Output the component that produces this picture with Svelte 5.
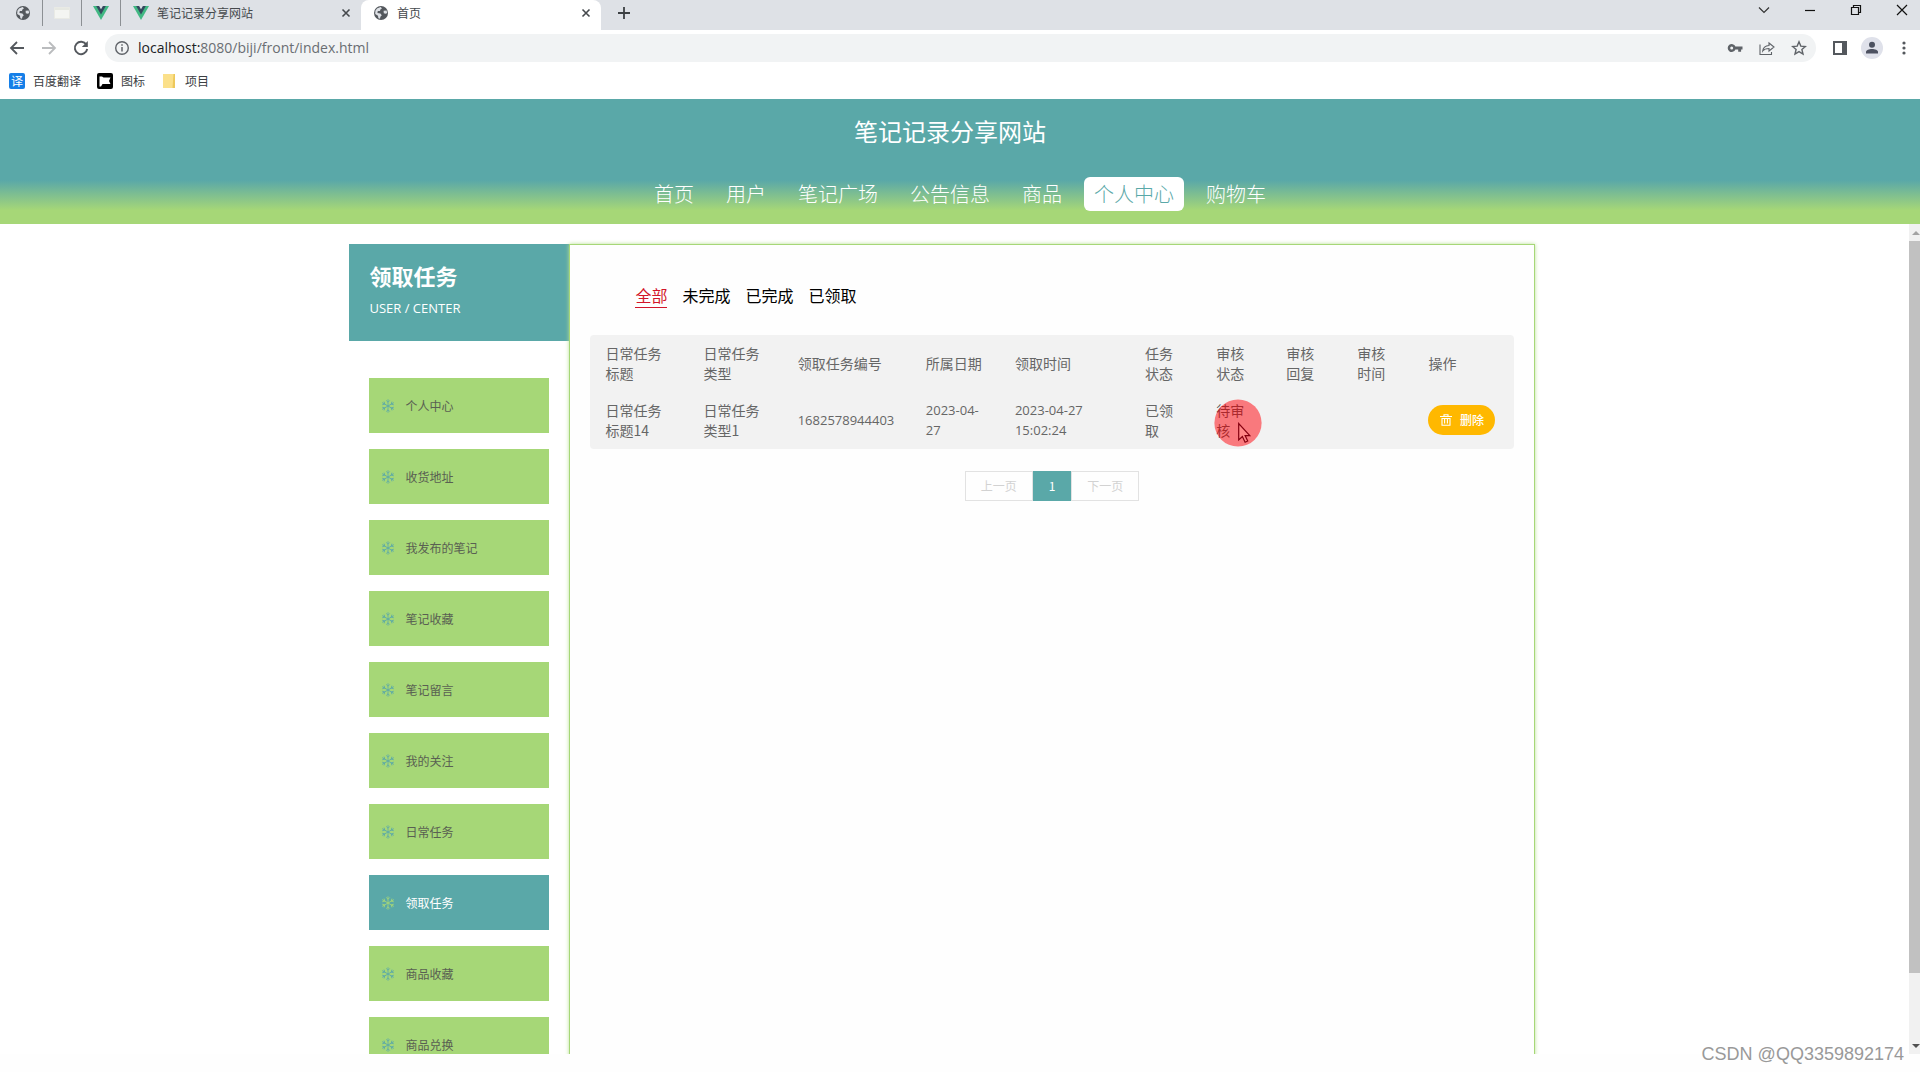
<script>
  const nav = ['首页', '用户', '笔记广场', '公告信息', '商品', '个人中心', '购物车'];
  const menu = ['个人中心', '收货地址', '我发布的笔记', '笔记收藏', '笔记留言', '我的关注', '日常任务', '领取任务', '商品收藏', '商品兑换'];
  const filters = ['全部', '未完成', '已完成', '已领取'];
  const columns = [
    { title: '日常任务标题', width: 98 },
    { title: '日常任务类型', width: 94 },
    { title: '领取任务编号', width: 128 },
    { title: '所属日期', width: 89 },
    { title: '领取时间', width: 130 },
    { title: '任务状态', width: 71 },
    { title: '审核状态', width: 70 },
    { title: '审核回复', width: 71 },
    { title: '审核时间', width: 71 },
    { title: '操作', width: 100 }
  ];
  const total = columns.reduce((sum, c) => sum + c.width, 0);
  let activeNav = $state('个人中心');
  let activeMenu = $state('领取任务');
  let activeFilter = $state('全部');
</script>

{#snippet globe()}
  <svg width="16" height="16" viewBox="0 0 16 16" aria-hidden="true">
    <circle cx="8" cy="8" r="7" fill="#54585d" />
    <path d="M4 3.400 7.600 2l1.400 1.200-1.600 1.200-.4 1.600H4.800L4.400 8l3 .4 1.400 1.800-1.400 1.600-.4 2-1.600-.6-.4-2.400L2.200 9l.2-3.200zM10.600 5.800l3-.2.6 2.400-1.400.8-2-.6z" fill="#dee1e6" />
  </svg>
{/snippet}

{#snippet vue()}
  <svg width="16" height="16" viewBox="0 0 16 16" aria-hidden="true">
    <path d="M0 1h16L8 15z" fill="#41b883" />
    <path d="M3.200 1h9.600L8 9.400z" fill="#35495e" />
    <path d="M6.100 1h3.800L8 4.200z" fill="#dee1e6" />
  </svg>
{/snippet}

{#snippet closeIcon()}
  <svg width="10" height="10" viewBox="0 0 10 10" aria-hidden="true"><path d="M1.500 1.500l7 7m0-7l-7 7" stroke="#45494d" stroke-width="1.600" /></svg>
{/snippet}

{#snippet snow()}
  <svg class="snow" width="14" height="14" viewBox="0 0 14 14" aria-hidden="true">
    <g fill="none" stroke="currentColor" stroke-width=".8">
      {#each [0, 60, 120, 180, 240, 300] as angle}
        <path transform="rotate({angle} 7 7)" d="M7 7V.3M5.200 1.400L7 3.200l1.800-1.800" />
      {/each}
    </g>
  </svg>
{/snippet}

<div class="window">
  <div class="tabstrip">
    <div class="tab pinned">{@render globe()}</div>
    <div class="tab pinned">
      <svg width="16" height="16" viewBox="0 0 16 16" aria-hidden="true"><path d="M.5 2.500h15v11H.5z" fill="#f4f5f2" stroke="#e9eae5" /><path d="M1 3h14v2H1z" fill="#e6e8e2" /></svg>
    </div>
    <div class="tab pinned">{@render vue()}</div>
    <div class="tab wide">
      {@render vue()}<span class="label">笔记记录分享网站</span>
      <button aria-label="关闭标签页">{@render closeIcon()}</button>
    </div>
    <div class="tab wide active">
      {@render globe()}<span class="label">首页</span>
      <button aria-label="关闭标签页">{@render closeIcon()}</button>
    </div>
    <button class="newtab" aria-label="新标签页">
      <svg width="14" height="14" viewBox="0 0 14 14"><path d="M7 1v12M1 7h12" stroke="#3c4043" stroke-width="1.800" /></svg>
    </button>
    <div class="controls">
      <button aria-label="搜索标签页"><svg width="14" height="14" viewBox="0 0 14 14"><path d="M2 4.500l5 5 5-5" fill="none" stroke="#333" stroke-width="1.200" /></svg></button>
      <button aria-label="最小化"><svg width="14" height="14" viewBox="0 0 14 14"><path d="M2 7.500h10" stroke="#111" stroke-width="1.200" /></svg></button>
      <button aria-label="还原"><svg width="14" height="14" viewBox="0 0 14 14"><path d="M2.500 4.500h7v7h-7zM4.500 4.500v-2h7v7h-2" fill="none" stroke="#111" stroke-width="1.200" /></svg></button>
      <button aria-label="关闭"><svg width="14" height="14" viewBox="0 0 14 14"><path d="M2 2l10 10M12 2L2 12" stroke="#111" stroke-width="1.200" /></svg></button>
    </div>
  </div>

  <div class="toolbar">
    <button aria-label="后退"><svg width="16" height="16" viewBox="0 0 16 16"><path d="M15 8H2.500M8 2L2 8l6 6" fill="none" stroke="#54585d" stroke-width="1.800" /></svg></button>
    <button aria-label="前进"><svg width="16" height="16" viewBox="0 0 16 16"><path d="M1 8h12.500M8 2l6 6-6 6" fill="none" stroke="#babcbe" stroke-width="1.800" /></svg></button>
    <button aria-label="刷新"><svg width="16" height="16" viewBox="0 0 16 16"><path d="M13.300 4.600A6.200 6.200 0 1 0 14.200 9" fill="none" stroke="#54585d" stroke-width="1.900" /><path d="M14.800 1v6h-6z" fill="#54585d" /></svg></button>
    <div class="omnibox">
      <svg width="16" height="16" viewBox="0 0 16 16" aria-hidden="true"><circle cx="8" cy="8" r="6.300" fill="none" stroke="#5f6368" stroke-width="1.400" /><path d="M8 7v4.500M8 4.300v1.500" stroke="#5f6368" stroke-width="1.500" /></svg>
      <span class="url">localhost:<span>8080/biji/front/index.html</span></span>
      <button aria-label="管理密码"><svg width="16" height="16" viewBox="0 0 16 16"><path d="M8.400 6.500H15.500v3h-1.400v2.200h-2.900V9.500H8.400a4 4 0 1 1 0-3z" fill="#5f6368" /><circle cx="4.700" cy="8" r="1.500" fill="#f1f3f4" /></svg></button>
      <button aria-label="分享"><svg width="16" height="16" viewBox="0 0 16 16"><path d="M1 4.500v10h11.500v-2.500M3.700 11c.4-3.400 2.300-5.300 6.300-5.500V3l5 4-5 4V8.500C7 8.500 5 9.300 3.700 11z" fill="none" stroke="#5f6368" stroke-width="1.100" /></svg></button>
      <button aria-label="收藏"><svg width="16" height="16" viewBox="0 0 16 16"><path d="M8 1.800l1.800 4.300 4.600.4-3.500 3 1.100 4.500-4-2.400L4 14l1.100-4.500-3.500-3 4.600-.4z" fill="none" stroke="#5f6368" stroke-width="1.400" /></svg></button>
    </div>
    <div class="tools">
      <button aria-label="侧边栏"><svg width="16" height="16" viewBox="0 0 16 16"><path d="M1 1h14v14H1z" fill="#54585d" /><path d="M3 3h7v10H3z" fill="#fff" /></svg></button>
      <button aria-label="用户"><svg width="22" height="22" viewBox="0 0 22 22"><circle cx="11" cy="11" r="11" fill="#dfe1ea" /><circle cx="11" cy="7.800" r="3" fill="#4c5160" /><path d="M5 16.500v-1.500c0-4 12-4 12 0v1.500z" fill="#4c5160" /></svg></button>
      <button aria-label="菜单"><svg width="16" height="16" viewBox="0 0 16 16" fill="#54585d"><circle cx="8" cy="3" r="1.600" /><circle cx="8" cy="8" r="1.600" /><circle cx="8" cy="13" r="1.600" /></svg></button>
    </div>
  </div>

  <div class="bookmarks">
    <a href="#translate"><span class="badge">译</span>百度翻译</a>
    <a href="#icons"><svg width="16" height="16" viewBox="0 0 16 16" aria-hidden="true"><rect width="16" height="16" rx="2" fill="#000" /><path d="M2.500 3.500h2.500l1.500 1h7l-1.500 3.500 1.500 3H5.500l-1.500 2.500H2.500z" fill="#fff" /></svg>图标</a>
    <a href="#projects"><svg width="16" height="16" viewBox="0 0 16 16" aria-hidden="true"><path d="M2 1h12v14H2z" fill="#fbe08a" /><path d="M12.500 1H14v14h-2.500z" fill="#edc85b" /></svg>项目</a>
  </div>

  <header>
    <h1>笔记记录分享网站</h1>
    <nav>
      {#each nav as item}
        <a href="#{item}" class:active={item === activeNav} onclick={() => (activeNav = item)}>{item}</a>
      {/each}
    </nav>
  </header>

  <div class="viewport">
    <main>
      <aside>
        <div class="heading">
          <h2>领取任务</h2>
          <p>USER / CENTER</p>
        </div>
        <ul>
          {#each menu as item}
            <li><a href="#{item}" class:active={item === activeMenu} onclick={() => (activeMenu = item)}>{@render snow()}{item}</a></li>
          {/each}
        </ul>
      </aside>

      <section>
        <div class="filters">
          {#each filters as f}
            <button class:active={f === activeFilter} onclick={() => (activeFilter = f)}>{f}</button>
          {/each}
        </div>
        <table>
          <colgroup>
            {#each columns as c}<col style="width:{(c.width / total) * 100}%" />{/each}
          </colgroup>
          <thead>
            <tr>{#each columns as c}<th scope="col">{c.title}</th>{/each}</tr>
          </thead>
          <tbody>
            <tr>
              <td>日常任务标题14</td>
              <td>日常任务类型1</td>
              <td class="num">1682578944403</td>
              <td class="num">2023-04-27</td>
              <td class="num">2023-04-27 15:02:24</td>
              <td>已领取</td>
              <td class="pointed">待审核
                <svg class="pointer" width="48" height="48" viewBox="0 0 48 48" aria-hidden="true">
                  <circle cx="24" cy="24" r="23.600" fill="#ff0008" fill-opacity=".5" />
                  <path d="M24.700 24.500v16.500l3.700-3.400 2.700 5.600 2.600-1.200-2.600-5.400h4.700z" fill="#ff8888" stroke="#850010" stroke-width="1.200" />
                </svg>
              </td>
              <td></td>
              <td></td>
              <td class="action">
                <button class="delete">
                  <svg width="12" height="12" viewBox="0 0 12 12" aria-hidden="true"><path d="M0 2.500h12M4 2V.7h4V2M2 4v7.300h8V4M4.600 5v4.500M7.400 5v4.500M2 4.500h8" fill="none" stroke="#fff" stroke-width="1.100" /></svg>删除
                </button>
              </td>
            </tr>
          </tbody>
        </table>
        <div class="pager">
          <button disabled>上一页</button>
          <button class="current">1</button>
          <button disabled>下一页</button>
        </div>
      </section>
    </main>
    <div class="scrollbar" aria-hidden="true">
      <svg width="14" height="17" viewBox="0 0 14 17"><path d="M3 11l4-4 4 4z" fill="#a3a3a3" /></svg>
      <div class="track"><div class="thumb"></div></div>
      <svg width="14" height="17" viewBox="0 0 14 17"><path d="M3 7l4 4 4-4z" fill="#505050" /></svg>
    </div>
  </div>
  <footer><span>CSDN @QQ3359892174</span></footer>
</div>

<style>
  :global(body) { margin: 0; }
  .window {
    display: flex;
    flex-direction: column;
    height: 100vh;
    overflow: hidden;
    background: #fff;
    color: #333;
    font: 12px/20px 'Noto Sans CJK SC', sans-serif;
  }
  button { padding: 0; border: 0; background: none; color: inherit; font: inherit; cursor: pointer; }
  a { color: inherit; text-decoration: none; }
  svg { display: block; flex: none; }
  h1, h2, p, ul { margin: 0; padding: 0; font-weight: 400; }

  .tabstrip { display: flex; flex: none; height: 30px; padding-left: 4px; background: #dee1e6; }
  .tab { display: flex; align-items: center; height: 26px; box-sizing: border-box; }
  .pinned { width: 39px; justify-content: center; border-right: 1px solid #8c9094; }
  .wide { width: 240px; padding: 0 10px 0 12px; gap: 8px; }
  .label { flex: 1; color: #45494d; }
  .active.wide { height: 30px; padding-bottom: 4px; border-radius: 8px 8px 0 0; background: #fff; }
  .newtab { display: flex; align-items: center; height: 26px; margin-left: 16px; }
  .controls { display: flex; align-items: center; height: 20px; gap: 32px; margin-left: auto; padding-right: 11px; }

  .toolbar { display: flex; flex: none; align-items: center; height: 36px; padding: 0 8px 0 9px; gap: 16px; }
  .omnibox { display: flex; flex: 1; align-items: center; height: 28px; padding: 0 9px; gap: 16px; border-radius: 14px; background: #f1f3f4; }
  .url { flex: 1; margin-left: -8px; color: #202124; font: 14px/20px 'Open Sans', sans-serif; }
  .url span { color: #6a6e73; }
  .tools { display: flex; align-items: center; gap: 13px; }
  .bookmarks { display: flex; flex: none; align-items: center; height: 29px; padding: 0 0 4px 9px; gap: 16px; color: #3c4043; }
  .bookmarks a { display: flex; align-items: center; gap: 8px; }
  .badge { width: 16px; height: 16px; border-radius: 2px; background: #157fe8; color: #fff; line-height: 16px; text-align: center; }

  header {
    flex: none;
    height: 125px;
    box-sizing: border-box;
    background: linear-gradient(#5aa8a8 0, #5aa8a8 65%, #a6d777 89%);
    color: #fff;
    text-align: center;
  }
  h1 { padding: 14px 20px 0 0; font-size: 24px; line-height: 36px; }
  nav { display: flex; justify-content: center; gap: 12px; margin-top: 28px; font-size: 20px; line-height: 34px; font-weight: 300; }
  nav a { padding: 0 10px; border-radius: 6px; }
  nav .active { background: #fff; color: #5aa8a8; }

  .viewport { display: flex; flex: 1; min-height: 0; overflow: hidden; }
  main { display: flex; flex: 1; align-items: stretch; height: max-content; padding: 20px 19.5% 20px 18.2%; }
  aside { flex: none; width: 220px; }
  .heading { height: 97px; box-sizing: border-box; padding: 15px 20px; background: #5aa8a8; color: #fff; }
  h2 { font-size: 22px; line-height: 32px; font-weight: 700; }
  .heading p { font: 13px/34px 'Open Sans', sans-serif; }
  ul { display: flex; flex-direction: column; gap: 16px; padding: 37px 20px 0; list-style: none; }
  li a { display: flex; align-items: center; gap: 10px; height: 55px; padding: 0 12px; background: #a6d777; color: #596052; }
  .snow { color: #5aa8a8; }
  li .active { background: #5aa8a8; color: #fff; }
  .active .snow { color: #a6d777; }

  section { flex: 1; min-width: 0; padding: 38px 20px 0; border: 1px solid #a6d777; box-shadow: 0 0 4px #b9e094; background: #fefefe; }
  .filters { display: flex; gap: 15px; padding-left: 45px; margin-bottom: 27px; color: #000; font-size: 16px; line-height: 24px; }
  .filters button { border-bottom: 1px solid transparent; }
  .filters .active { border-color: #d2152a; color: #d2152a; }
  table { width: 100%; table-layout: fixed; border-collapse: collapse; border-radius: 4px; background: #f2f2f2; color: #666; font-size: 14px; line-height: 20px; }
  th, td { height: 40px; padding: 8px 15px 9px; text-align: left; font-weight: 400; }
  .num { font-family: 'Open Sans', sans-serif; font-size: 13px; }
  .pointed { position: relative; color: #555; }
  .pointer { position: absolute; left: 13px; top: 7px; }
  .action { padding-right: 0; }
  .delete { display: flex; align-items: center; justify-content: center; gap: 8px; width: 67px; height: 30px; border-radius: 15px; background: #ffb800; color: #fff; font-size: 12px; font-weight: 500; }
  .pager { display: flex; justify-content: center; margin-top: 22px; }
  .pager button { height: 30px; padding: 0 15px; border: 1px solid #e2e2e2; color: #d2d2d2; }
  .pager .current { border-color: #5aa8a8; background: #5aa8a8; color: #fff; }

  .scrollbar { display: flex; flex: none; flex-direction: column; width: 11px; overflow: hidden; background: #f1f1f1; }
  .track { flex: 1; }
  .thumb { height: 92%; background: #c1c1c1; }
  footer { flex: none; height: 18px; background: #fefefe; }
  footer span { position: absolute; right: 16px; bottom: 8px; color: #999; font: 18px/20px 'Liberation Sans', sans-serif; }
</style>
